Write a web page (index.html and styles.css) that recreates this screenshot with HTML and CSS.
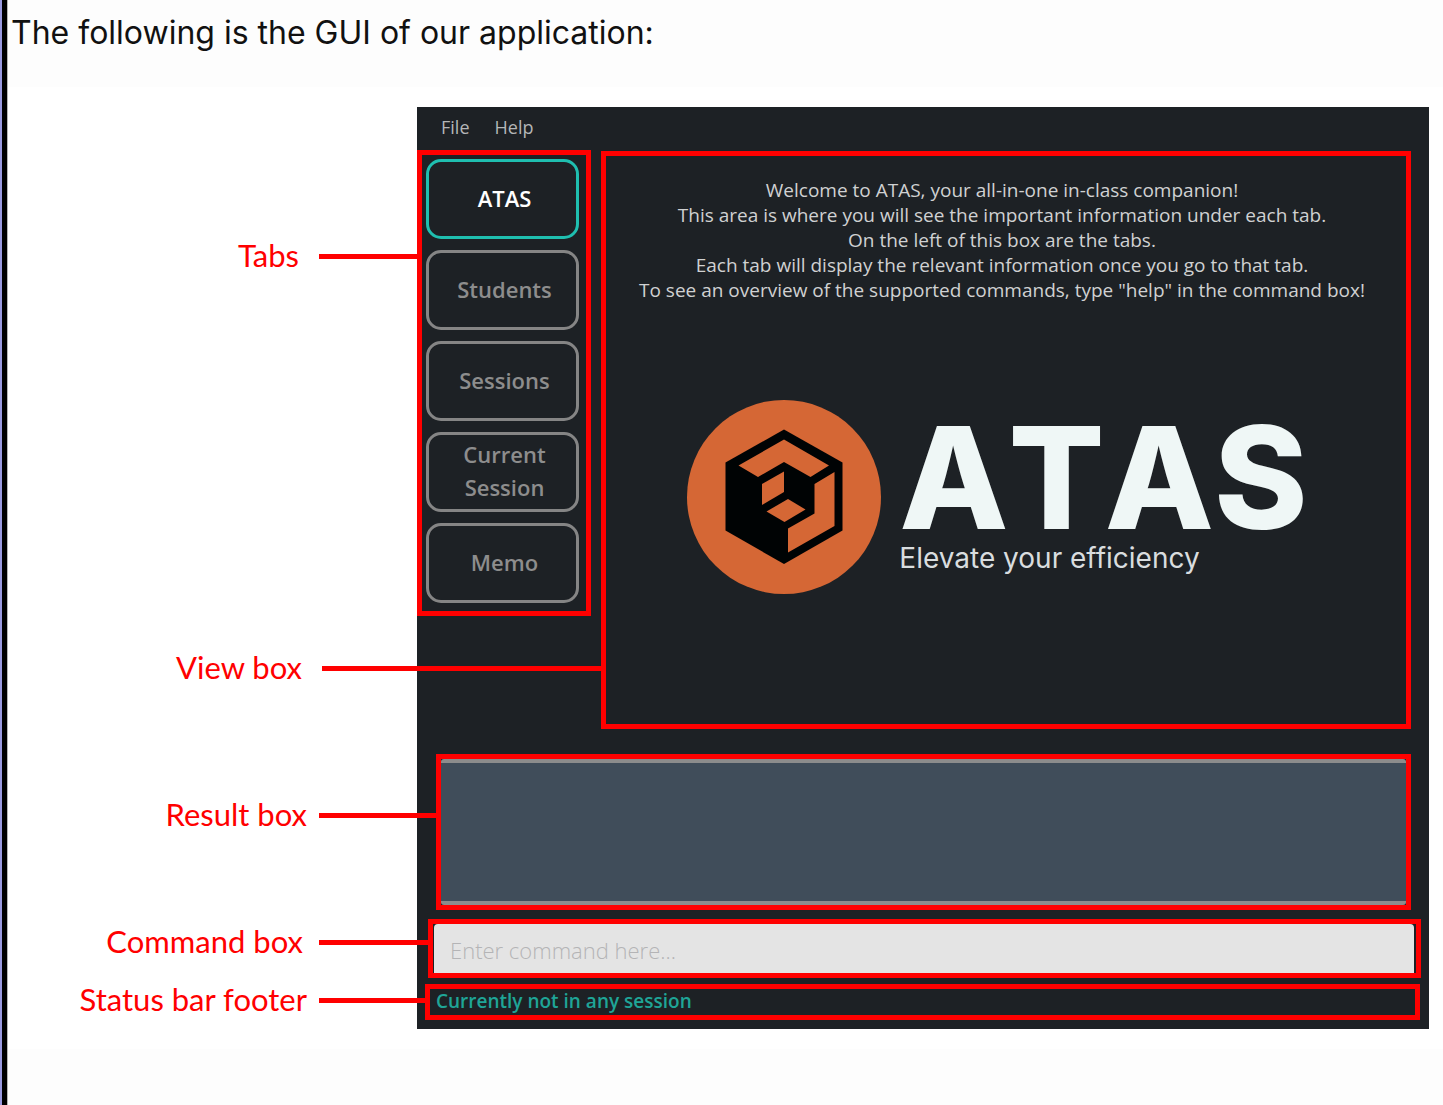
FILE: index.html
```html
<!DOCTYPE html>
<html lang="en">
<head>
<meta charset="utf-8">
<title>ATAS GUI overview</title>
<link rel="stylesheet" href="styles.css">
</head>
<body>
<main class="page">
  <p class="intro">The following is the GUI of our application:</p>
  <section class="figure">
    <div class="window">
      <nav class="menu" aria-label="Menu bar">
        <button class="menu-item" type="button">File</button>
        <button class="menu-item" type="button">Help</button>
      </nav>
      <div class="workspace">
        <div class="region tabs">
          <div class="callout callout-tabs"><span>Tabs</span><i class="leader"></i></div>
          <button class="tab tab-active" type="button">ATAS</button>
          <button class="tab" type="button">Students</button>
          <button class="tab" type="button">Sessions</button>
          <button class="tab" type="button">Current Session</button>
          <button class="tab" type="button">Memo</button>
        </div>
        <div class="region view">
          <div class="callout callout-view"><span>View box</span><i class="leader"></i></div>
          <p class="welcome">Welcome to ATAS, your all-in-one in-class companion!<br>
            This area is where you will see the important information under each tab.<br>
            On the left of this box are the tabs.<br>
            Each tab will display the relevant information once you go to that tab.<br>
            To see an overview of the supported commands, type "help" in the command box!</p>
          <div class="brand">
            <svg class="brand-mark" viewBox="0 0 194 194" aria-hidden="true">
              <circle cx="97" cy="97" r="97" fill="#d56735"/>
              <path fill="#000304" d="M97 29.500 155.500 62.500V130.500L97 164 38.500 130.500V62.500Z"/>
              <path fill="#d56735" d="M97 39.500 142 65.500 123.500 77 97 62 71 77 51.500 65.500Z"/>
              <path fill="#d56735" d="M97 71.500V92L75 105V84Z"/>
              <path fill="#d56735" d="M101 99 118.500 109.500 97.500 122 79.500 111.500Z"/>
              <path fill="#d56735" d="M147.500 72V126L101 152.500V128.500L127.500 113.500V84Z"/>
            </svg>
            <div class="brand-text">
              <div class="brand-name">ATAS</div>
              <div class="brand-line">Elevate your efficiency</div>
            </div>
          </div>
        </div>
      </div>
      <div class="region result">
        <div class="callout callout-result"><label for="result">Result box</label><i class="leader"></i></div>
        <textarea class="result-area" id="result" readonly></textarea>
      </div>
      <div class="region command">
        <div class="callout callout-command"><label for="command">Command box</label><i class="leader"></i></div>
        <input class="command-input" id="command" type="text" placeholder="Enter command here...">
      </div>
      <div class="region status">
        <div class="callout callout-status"><span>Status bar footer</span><i class="leader"></i></div>
        <span>Currently not in any session</span>
      </div>
    </div>
  </section>
</main>
</body>
</html>
```

FILE: styles.css
```css
* { box-sizing: border-box; }

html {
  border-left: 2px solid #9a9adf;
  background: #fdfdfd;
}

body {
  margin: 0;
  border-left: 5px solid #000;
}

.page {
  min-height: 100vh;
  border-left: 1px solid #b5b5b5;
}

.intro {
  margin: 0;
  padding: 13px 3px 34px;
  font: 32px/40px Inter, sans-serif;
  color: #111;
}

.figure {
  padding: 20px 14px 20px 409px;
  background: #fff;
}

.window {
  padding-bottom: 9px;
  background: #1d2125;
  color: #d0d1d2;
  font-family: "Open Sans", "Noto Sans", sans-serif;
}

.menu {
  display: flex;
  gap: 25px;
  height: 43px;
  padding: 0 24px;
}

.menu-item {
  padding: 0 0 4px;
  border: 0;
  background: none;
  color: #b4b6b7;
  font: 18px/24px "Open Sans", sans-serif;
}

.workspace {
  display: flex;
  align-items: flex-start;
  gap: 10px;
  padding-right: 18px;
}

/* Red outline that marks a part of the window */
.region {
  position: relative;
  border: 5px solid #f00;
}

.tabs {
  display: flex;
  flex-direction: column;
  flex: none;
  gap: 11px;
  width: 174px;
  padding: 4px 7px 8px 4px;
}

.tab {
  height: 80px;
  padding: 0 18px 2px 22px;
  border: 3px solid #858585;
  border-radius: 15px;
  background: none;
  color: #8d8d8d;
  font: 600 22px/33px "Open Sans", sans-serif;
}

.tab-active {
  border-color: #1fbfb0;
  color: #fff;
}

.view {
  flex: 1;
  min-height: 578px;
  margin-top: 1px;
  padding: 22px 8px 0 0;
}

.welcome {
  margin: 0;
  text-align: center;
  font-size: 19px;
  line-height: 25px;
}

.brand {
  display: flex;
  justify-content: center;
  gap: 18px;
  margin-top: 97px;
  padding-right: 9px;
}

.brand-mark {
  flex: none;
  width: 194px;
  height: 194px;
}

.brand-name {
  padding-top: 8px;
  color: #eff7f6;
  font: 800 142px/138px Inter, sans-serif;
  font-kerning: none;
}

.brand-line {
  color: #d9dddf;
  font: 28px/24px Inter, sans-serif;
}

.result {
  margin: 25px 18px 0 19px;
}

.result-area {
  display: block;
  width: 100%;
  height: 146px;
  border: solid #8c8c8c;
  border-width: 4px 0;
  border-radius: 3px;
  background: #404d5a;
  resize: none;
}

.command {
  margin: 9px 8px 0 11px;
  padding: 0 2px 0 1px;
}

.command-input {
  display: block;
  width: 100%;
  height: 49px;
  padding: 3px 16px 0;
  border: 0;
  border-radius: 4px 4px 0 0;
  background: #e4e4e4;
  font: 300 22px/32px "Open Sans", sans-serif;
}

.command-input::placeholder {
  color: #b4b4b6;
  opacity: 1;
}

.status {
  margin: 6px 9px 0 8px;
  padding: 0 6px 2px;
  color: #1fa597;
  font-size: 19px;
  font-weight: 600;
  line-height: 24px;
}

/* Label and leader line that run out to the left of a region */
.callout {
  position: absolute;
  right: 100%;
  margin-right: 5px;
  display: flex;
  align-items: center;
  gap: 20px;
  color: #f00;
  font: 400 31px/36px Lato, sans-serif;
  white-space: nowrap;
}

.callout > :first-child { padding-bottom: 3px; }

.leader {
  height: 5px;
  background: #f00;
}

.callout-tabs { top: 82px; }
.callout-tabs .leader { width: 98px; }
.callout-view { top: 493px; }
.callout-view .leader { width: 279px; }
.callout-result { top: 37px; gap: 12px; }
.callout-result .leader { width: 117px; }
.callout-command { top: -1px; gap: 16px; }
.callout-command .leader { width: 109px; }
.callout-status { top: -8px; gap: 12px; }
.callout-status .leader { width: 106px; }
```
